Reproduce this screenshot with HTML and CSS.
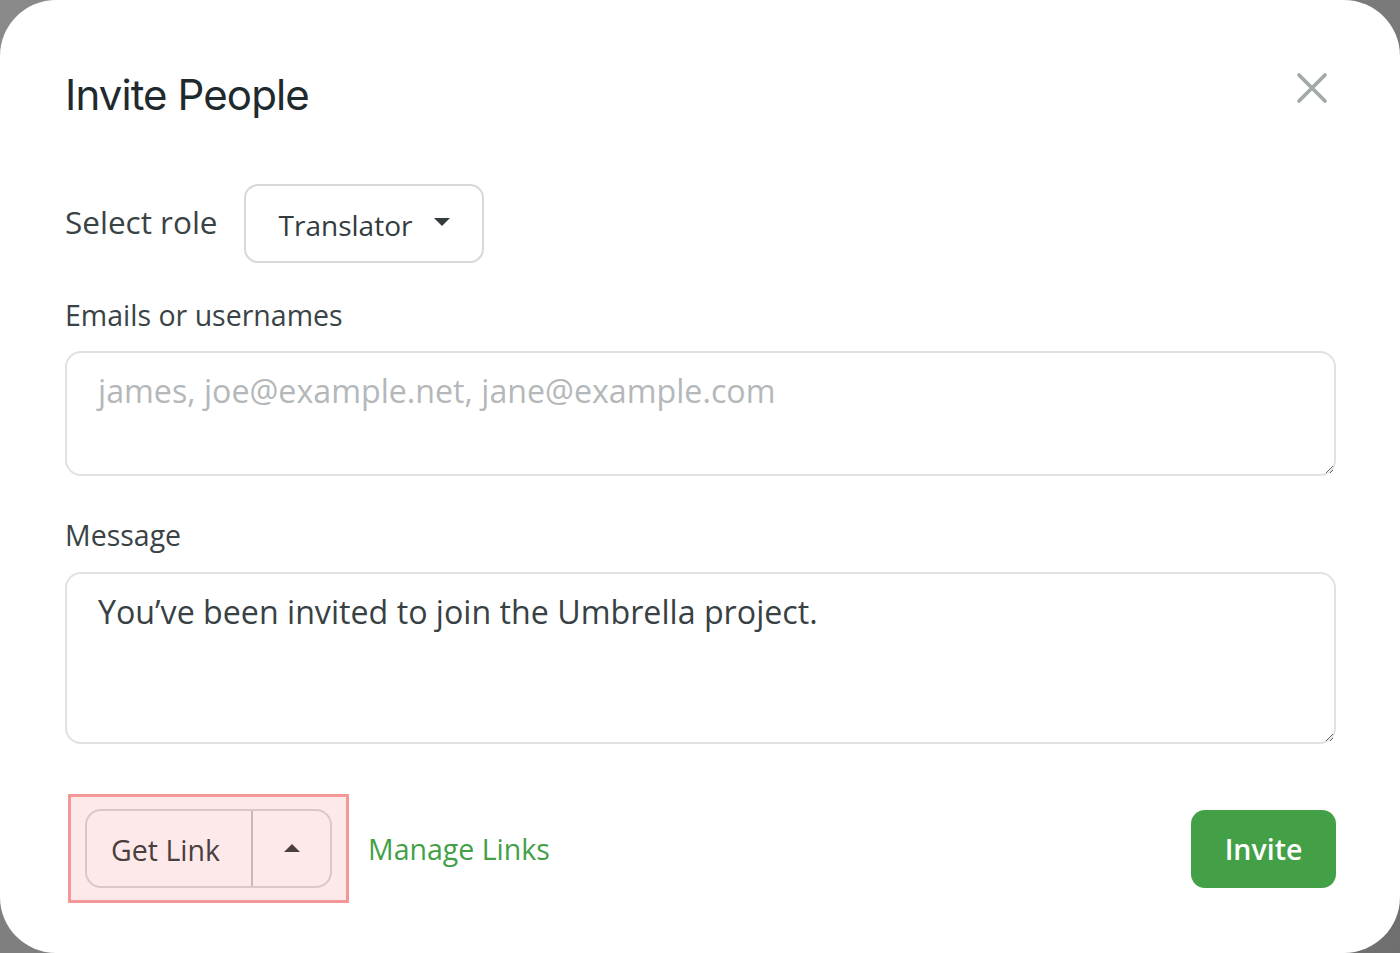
FILE: index.html
```html
<!DOCTYPE html>
<html lang="en">
<head>
<meta charset="utf-8">
<title>Invite People</title>
<link rel="stylesheet" href="styles.css">
</head>
<body>
<div class="modal">
  <div class="header">
    <h1 class="title">Invite People</h1>
    <button class="close" aria-label="Close">
      <svg width="32" height="32" viewBox="0 0 32 32"><path d="M3 3 L29 29 M29 3 L3 29" stroke="#a3a8ab" stroke-width="3.8" stroke-linecap="round" fill="none"/></svg>
    </button>
  </div>
  <div class="role-row">
    <span class="label role-label">Select role</span>
    <button class="select">Translator <span class="caret-down"></span></button>
  </div>
  <div class="label field-label">Emails or usernames</div>
  <textarea class="input emails" placeholder="james, joe@example.net, jane@example.com"></textarea>
  <div class="label field-label msg-label">Message</div>
  <textarea class="input message">You’ve been invited to join the Umbrella project.</textarea>
  <div class="footer">
    <div class="highlight">
      <div class="btn-group">
        <button class="btn-main">Get Link</button>
        <button class="btn-toggle"><span class="caret-up"></span></button>
      </div>
    </div>
    <a class="manage" href="#">Manage Links</a>
    <button class="invite">Invite</button>
  </div>
</div>
</body>
</html>
```
FILE: styles.css
```css
html, body {
  margin: 0;
  padding: 0;
}
body {
  width: 1400px;
  height: 953px;
  background: linear-gradient(135deg, #8a8a8a, #6f6f6f);
  font-family: "Open Sans", "Noto Sans", sans-serif;
  overflow: hidden;
}
.modal {
  box-sizing: border-box;
  width: 1400px;
  height: 953px;
  background: #ffffff;
  border-radius: 56px;
  padding: 66px 64px 0 65px;
  display: flex;
  flex-direction: column;
}
.header {
  display: flex;
  justify-content: space-between;
  align-items: center;
  height: 56px;
}
.title {
  margin: 0;
  font-family: "Inter", sans-serif;
  font-weight: 400;
  font-size: 42px;
  letter-spacing: -0.9px;
  color: #1f2a2e;
}
.close {
  border: 0;
  background: none;
  padding: 0;
  margin-right: 8px;
  margin-top: -12px;
  width: 32px;
  height: 32px;
}
.role-row {
  display: flex;
  align-items: center;
  gap: 26px;
  margin-top: 62px;
}
.label {
  font-size: 28.5px;
  font-weight: 500;
  color: #3a4346;
}
.role-label {
  font-size: 31.5px;
  margin-top: -4px;
}
.select {
  box-sizing: border-box;
  height: 79px;
  width: 240px;
  border: 2px solid #d6d8d9;
  border-radius: 14px;
  background: #fff;
  font-family: "Open Sans", sans-serif;
  font-size: 28px;
  font-weight: 500;
  color: #333b3e;
  display: flex;
  align-items: center;
  padding: 2px 0 0 33px;
  gap: 0;
}
.caret-down {
  width: 0;
  height: 0;
  border-left: 8px solid transparent;
  border-right: 8px solid transparent;
  border-top: 8px solid #333b3e;
  margin-left: 22px;
  margin-top: -6px;
}
.field-label {
  margin-top: 33px;
  line-height: 38px;
}
.msg-label {
  margin-top: 40px;
}
.input {
  box-sizing: border-box;
  width: 1271px;
  border: 2px solid #dfe1e2;
  border-radius: 16px;
  margin-top: 17px;
  font-family: "Open Sans", sans-serif;
  font-size: 32.2px;
  font-weight: 500;
  color: #384144;
  padding: 16px 31px;
  resize: vertical;
  outline: none;
}
.input::placeholder {
  color: #b4b8ba;
  font-weight: 500;
}
.emails {
  height: 125px;
}
.message {
  height: 172px;
  margin-top: 18px;
}
.footer {
  display: flex;
  align-items: center;
  margin-top: 50px;
}
.highlight {
  box-sizing: border-box;
  margin-left: 3px;
  width: 281px;
  height: 109px;
  border: 3px solid #f39797;
  background: #fde9e9;
  display: flex;
  align-items: center;
  padding-left: 14px;
}
.btn-group {
  display: flex;
  height: 79px;
  border: 2px solid #dcc6c6;
  border-radius: 16px;
  box-sizing: border-box;
  overflow: hidden;
}
.btn-main, .btn-toggle {
  border: 0;
  background: transparent;
  font-family: "Open Sans", sans-serif;
  font-size: 28.5px;
  font-weight: 500;
  color: #4a3e3f;
  padding: 0;
}
.btn-main {
  width: 166px;
  border-right: 2px solid #cbb7b7;
  padding: 2px 7px 0 0;
}
.btn-toggle {
  width: 77px;
  display: flex;
  align-items: center;
  justify-content: center;
}
.caret-up {
  width: 0;
  height: 0;
  border-left: 8px solid transparent;
  border-right: 8px solid transparent;
  border-bottom: 8px solid #4a3e3f;
  margin-top: -2px;
}
.manage {
  margin-left: 19px;
  font-size: 28.5px;
  font-weight: 500;
  color: #43a047;
  text-decoration: none;
}
.invite {
  margin-left: auto;
  width: 145px;
  height: 78px;
  border: 0;
  border-radius: 14px;
  background: #43a047;
  color: #ffffff;
  font-family: "Open Sans", sans-serif;
  font-weight: 600;
  font-size: 28.5px;
  padding: 0;
}
```
